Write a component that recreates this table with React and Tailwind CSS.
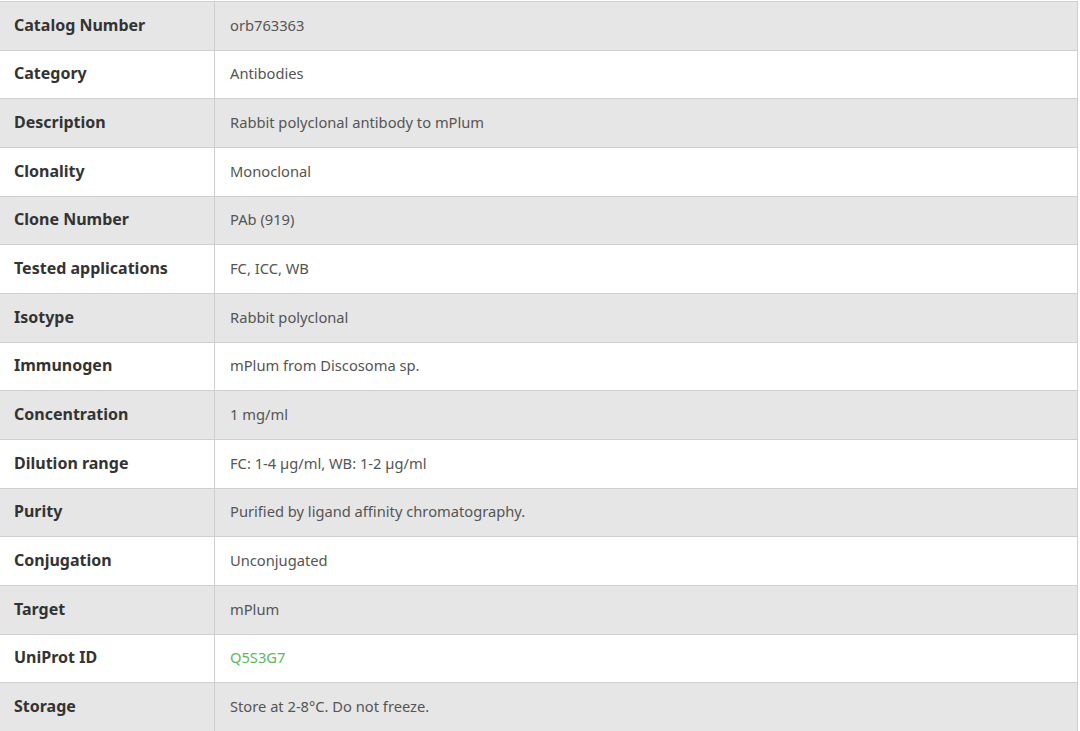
import React from 'react';

const rows = [
  ['Catalog Number', 'orb763363'],
  ['Category', 'Antibodies'],
  ['Description', 'Rabbit polyclonal antibody to mPlum'],
  ['Clonality', 'Monoclonal'],
  ['Clone Number', 'PAb (919)'],
  ['Tested applications', 'FC, ICC, WB'],
  ['Isotype', 'Rabbit polyclonal'],
  ['Immunogen', 'mPlum from Discosoma sp.'],
  ['Concentration', '1 mg/ml'],
  ['Dilution range', 'FC: 1-4 µg/ml, WB: 1-2 µg/ml'],
  ['Purity', 'Purified by ligand affinity chromatography.'],
  ['Conjugation', 'Unconjugated'],
  ['Target', 'mPlum'],
  ['UniProt ID', 'Q5S3G7', true],
  ['Storage', 'Store at 2-8°C. Do not freeze.'],
];

const App = () => {
  return (
    <div className="min-h-screen bg-white" style={{ fontFamily: '"Noto Sans", "Open Sans", sans-serif' }}>
      <div className="w-[1078px] border-t border-r border-[#cfcfcf] mt-px">
        {rows.map(([label, value, isLink], i) => (
          <div
            key={label}
            className={`flex h-[48.67px] border-b border-[#cfcfcf] ${i % 2 === 0 ? 'bg-[#e6e6e6]' : 'bg-white'}`}
          >
            <div className="w-[215px] shrink-0 flex items-center pl-[14px] pb-[2px] border-r border-[#cfcfcf] text-[16px] font-bold text-[#333]">
              {label}
            </div>
            <div className={`flex-1 flex items-center pl-[15px] pb-[2px] text-[14.7px] ${isLink ? 'text-[#5cb85c]' : 'text-[#555]'}`}>
              {value}
            </div>
          </div>
        ))}
      </div>
    </div>
  );
};

export default App;
